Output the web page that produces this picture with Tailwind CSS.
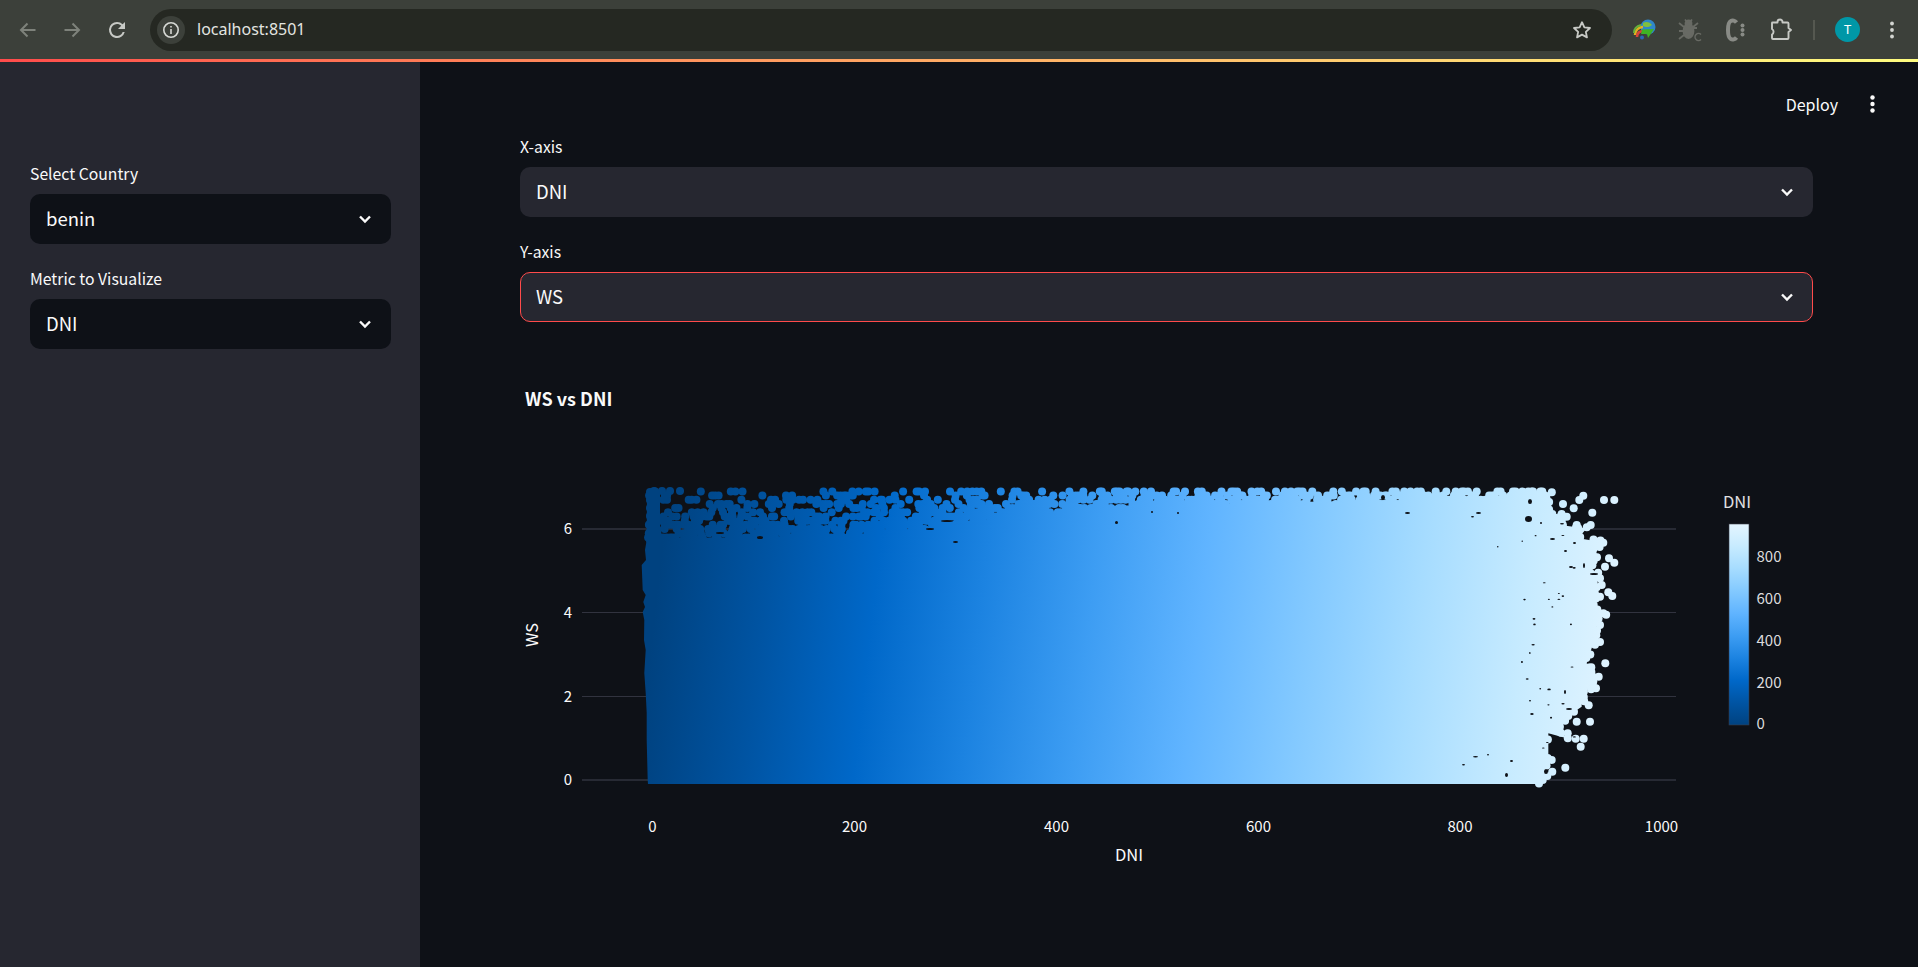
<!DOCTYPE html>
<html><head><script src="https://cdn.jsdelivr.net/npm/@tailwindcss/browser@4"></script></head>
<body class="m-0 h-[967px] w-[1918px] overflow-hidden bg-[#0e1117] text-[#fafafa] font-['Noto_Sans_CJK_JP',sans-serif]">

<header class="flex h-[59px] items-center bg-[#3c403a] pl-[14px] text-[#c7c9c5]">
  <svg class="h-[28px] w-[28px] text-[#7e827b]" viewBox="0 0 28 28" fill="none" stroke="currentColor" stroke-width="2"><path d="M21.5 14H7M13.5 7.5 7 14l6.500 6.500"/></svg>
  <svg class="ml-[16px] h-[28px] w-[28px] text-[#7e827b]" viewBox="0 0 28 28" fill="none" stroke="currentColor" stroke-width="2"><path d="M6.500 14H21M14.500 7.500 21 14l-6.500 6.500"/></svg>
  <svg class="ml-[19px] h-[24px] w-[24px]" viewBox="0 0 24 24" fill="currentColor"><path d="M17.650 6.350A7.950 7.950 0 0 0 12 4a8 8 0 1 0 7.730 10h-2.080A6 6 0 1 1 12 6c1.660 0 3.140.690 4.220 1.780L13 11h7V4l-2.350 2.350z"/></svg>
  <div class="ml-[21px] flex h-[42px] w-[1462px] shrink-0 items-center rounded-full bg-[#252822] pl-[7px]">
    <div class="flex h-[28px] w-[28px] items-center justify-center rounded-full bg-[#3c403a]">
      <svg class="h-[18px] w-[18px] text-[#d6d8d4]" viewBox="0 0 18 18" fill="none" stroke="currentColor" stroke-width="1.600"><circle cx="9" cy="9" r="7.200"/><path d="M9 8v5M9 5v1.600"/></svg>
    </div>
    <span class="ml-[12px] -translate-y-px font-['Noto_Sans',sans-serif] text-[16px] text-[#e3e5e1]">localhost:8501</span>
    <svg class="ml-auto mr-[19px] h-[22px] w-[22px] text-[#c7c9c5]" viewBox="0 0 24 24" fill="none" stroke="currentColor" stroke-width="2" stroke-linejoin="round"><path d="m12 3.500 2.600 5.600 6.100.700-4.500 4.200 1.200 6L12 17l-5.400 3 1.200-6-4.500-4.200 6.100-.700z"/></svg>
  </div>
  <svg class="ml-[19px] h-[28px] w-[28px]" viewBox="0 0 28 28">
    <circle cx="17" cy="11" r="7.500" fill="#2f86c9"/><path d="M12 7c3-2 7-1 9 2-2 2-6 3-9 1z" fill="#7fbf3f"/>
    <path d="M4 19c0-5 4-8 8-8" fill="none" stroke="#e2b021" stroke-width="2.500"/><path d="M6 21c0-4 3-6 7-6" fill="none" stroke="#d8423a" stroke-width="2.500"/><path d="M3 17c0-4 3-7 7-8" fill="none" stroke="#66b13a" stroke-width="2"/>
    <path d="M11 13.500 23 13l-6 9-1-4-6 0z" fill="#3fb324"/><circle cx="11" cy="21.500" r="2" fill="#2b66b8"/>
  </svg>
  <svg class="ml-[17px] h-[28px] w-[28px] text-[#686a64]" viewBox="0 0 28 28" fill="none" stroke="currentColor" stroke-width="1.800"><ellipse cx="12.500" cy="15" rx="5" ry="7" fill="currentColor"/><circle cx="12.500" cy="7.500" r="3" fill="currentColor"/><path d="M9 3.500 11 6M16 3.500 14 6M3 7l5 4M22 7l-5 4M3 23l5-4M17 12h4M3 15h5"/><path d="M25 18.500a3.500 3.500 0 1 0 0 5" stroke-width="1.500"/></svg>
  <svg class="ml-[17px] h-[28px] w-[28px] text-[#898b86]" viewBox="0 0 28 28" fill="currentColor"><path d="M15.500 6.500C14 4.500 11.500 4 9.800 5 7.500 6.200 7 9 7 14s.500 7.800 2.800 9c1.700 1 4.200.500 5.700-1.500" fill="none" stroke="currentColor" stroke-width="4"/><circle cx="21.500" cy="9.500" r="2"/><circle cx="21.500" cy="14" r="2"/><circle cx="21.500" cy="18.500" r="2"/></svg>
  <svg class="ml-[18px] h-[28px] w-[28px] text-[#c7c9c5]" viewBox="0 0 28 28" fill="none" stroke="currentColor" stroke-width="1.900" stroke-linejoin="round"><path d="M5.500 6.500h5V6a2.500 2.500 0 0 1 5 0v.500h5a1 1 0 0 1 1 1V12l2.500 2-2.500 2v6a1 1 0 0 1-1 1H6a1 1 0 0 1-1-1v-3.500a3 3 0 0 0 1.500-2.500A3 3 0 0 0 5 13V7a.5.5 0 0 1 .5-.500z"/></svg>
  <div class="ml-[18px] h-[20px] w-[2px] bg-[#555850]"></div>
  <div class="ml-[20px] flex h-[25px] w-[25px] items-center justify-center rounded-full bg-[#0097a7] font-['Noto_Sans',sans-serif] text-[13px] text-white">T</div>
  <svg class="ml-[30px] h-[20px] w-[4px] text-[#d3d5d1]" viewBox="0 0 4 20" fill="currentColor"><circle cx="2" cy="3.500" r="1.900"/><circle cx="2" cy="10" r="1.900"/><circle cx="2" cy="16.500" r="1.900"/></svg>
</header>
<div class="h-[3px] bg-gradient-to-r from-[#ff4b4b] to-[#fffd80]"></div>

<div class="flex h-[905px]">
  <aside class="w-[420px] shrink-0 bg-[#262730] pl-[30px] pr-[29px] pt-[101px]">
    <label class="block h-[22px] text-[15.750px] leading-[21px]">Select Country</label>
    <div class="mt-[9px] flex h-[50px] items-center justify-between rounded-[10px] bg-[#0e1117] pl-[16px] pr-[19px] text-[18.500px]">
      <span>benin</span>
      <svg class="h-[14px] w-[14px]" viewBox="0 0 14 14" fill="none" stroke="currentColor" stroke-width="2.400"><path d="m2 4.500 5 5 5-5"/></svg>
    </div>
    <label class="mt-[24px] block h-[22px] text-[15.750px] leading-[21px]">Metric to Visualize</label>
    <div class="mt-[9px] flex h-[50px] items-center justify-between rounded-[10px] bg-[#0e1117] pl-[16px] pr-[19px] text-[18.500px]">
      <span>DNI</span>
      <svg class="h-[14px] w-[14px]" viewBox="0 0 14 14" fill="none" stroke="currentColor" stroke-width="2.400"><path d="m2 4.500 5 5 5-5"/></svg>
    </div>
  </aside>

  <main class="relative flex-1 pl-[100px] pr-[105px] pt-[74px]">
    <div class="absolute right-[43px] top-[31px] flex items-center gap-[32px]">
      <span class="text-[16px] leading-[22px]">Deploy</span>
      <svg class="h-[18px] w-[5px]" viewBox="0 0 5 18" fill="currentColor"><circle cx="2.500" cy="2.500" r="2.200"/><circle cx="2.500" cy="9" r="2.200"/><circle cx="2.500" cy="15.500" r="2.200"/></svg>
    </div>

    <label class="block h-[22px] text-[15.750px] leading-[21px]">X-axis</label>
    <div class="mt-[9px] flex h-[50px] items-center justify-between rounded-[10px] bg-[#262730] pl-[16px] pr-[19px] text-[18.500px]">
      <span>DNI</span>
      <svg class="h-[14px] w-[14px]" viewBox="0 0 14 14" fill="none" stroke="currentColor" stroke-width="2.400"><path d="m2 4.500 5 5 5-5"/></svg>
    </div>
    <label class="mt-[24px] block h-[22px] text-[15.750px] leading-[21px]">Y-axis</label>
    <div class="mt-[9px] flex h-[50px] items-center justify-between rounded-[10px] border border-[#ff4b4b] bg-[#262730] pl-[15px] pr-[18px] text-[18.500px]">
      <span>WS</span>
      <svg class="h-[14px] w-[14px]" viewBox="0 0 14 14" fill="none" stroke="currentColor" stroke-width="2.400"><path d="m2 4.500 5 5 5-5"/></svg>
    </div>

    <svg class="mt-[23px] block h-[560px] w-[1293px] overflow-visible" viewBox="520 345 1293 560">
      <defs>
        <linearGradient id="g" gradientUnits="userSpaceOnUse" x1="652" y1="635" x2="1620" y2="745">
          <stop offset="0" stop-color="#004280"/><stop offset=".111" stop-color="#0054a3"/><stop offset=".222" stop-color="#0068c9"/><stop offset=".333" stop-color="#1c83e1"/><stop offset=".444" stop-color="#3d9df3"/><stop offset=".556" stop-color="#60b4ff"/><stop offset=".667" stop-color="#83c9ff"/><stop offset=".778" stop-color="#a6dcff"/><stop offset=".889" stop-color="#c7ebff"/><stop offset="1" stop-color="#e4f5ff"/>
        </linearGradient>
        <linearGradient id="c" x1="0" y1="1" x2="0" y2="0">
          <stop offset="0" stop-color="#004280"/><stop offset=".111" stop-color="#0054a3"/><stop offset=".222" stop-color="#0068c9"/><stop offset=".333" stop-color="#1c83e1"/><stop offset=".444" stop-color="#3d9df3"/><stop offset=".556" stop-color="#60b4ff"/><stop offset=".667" stop-color="#83c9ff"/><stop offset=".778" stop-color="#a6dcff"/><stop offset=".889" stop-color="#c7ebff"/><stop offset="1" stop-color="#e4f5ff"/>
        </linearGradient>
      </defs>

      <text x="525" y="397.500" dominant-baseline="central" fill="#fafafa" class="text-[18px] font-bold">WS vs DNI</text>

      <g stroke="#31333f">
        <path d="M582 529H1676M582 780H1676" stroke-width="1.600"/>
        <path d="M582 612.500H1676M582 696.500H1676" stroke-width="1"/>
      </g>

      <g id="scatter" fill="url(#g)"></g>
      <g id="specks" fill="#0e1117"></g>

      <g fill="#fafafa" class="text-[15px]" dominant-baseline="central">
        <g text-anchor="end">
          <text x="572" y="527.500">6</text><text x="572" y="611">4</text><text x="572" y="695">2</text><text x="572" y="778.500">0</text>
        </g>
        <g text-anchor="middle">
          <text x="652.500" y="825.500">0</text><text x="854.500" y="825.500">200</text><text x="1056.500" y="825.500">400</text><text x="1258.500" y="825.500">600</text><text x="1460" y="825.500">800</text><text x="1661.500" y="825.500">1000</text>
        </g>
      </g>
      <text x="1129" y="854" text-anchor="middle" dominant-baseline="central" fill="#fafafa" class="text-[16.500px]">DNI</text>
      <text transform="translate(531 635) rotate(-90)" text-anchor="middle" dominant-baseline="central" fill="#fafafa" class="text-[16.500px]">WS</text>

      <text x="1723" y="501" dominant-baseline="central" fill="#e0e0e2" class="text-[16.500px]">DNI</text>
      <rect x="1729" y="524" width="20" height="201" fill="url(#c)" stroke="#3b3c46" stroke-width=".6"/>
      <g fill="#dcdcde" class="text-[15px]" dominant-baseline="central">
        <text x="1756.500" y="555.500">800</text><text x="1756.500" y="597">600</text><text x="1756.500" y="639">400</text><text x="1756.500" y="681">200</text><text x="1756.500" y="722.500">0</text>
      </g>
    </svg>
  </main>
</div>

<script>
(function () {
  var s = 20240611;
  function rnd() { s |= 0; s = s + 0x6D2B79F5 | 0; var t = Math.imul(s ^ s >>> 15, 1 | s); t = t + Math.imul(t ^ t >>> 7, 61 | t) ^ t; return ((t ^ t >>> 14) >>> 0) / 4294967296; }
  var R = 4;
  var out = '';
  function dot(x, y) { out += '<circle cx="' + x.toFixed(1) + '" cy="' + y.toFixed(1) + '" r="' + R + '"/>'; }
  function z5(a) { return [1400 + a[0] / 3, 470 + a[1] / 3]; }
  function bodyTop(x) {
    if (x < 850) return 536;
    if (x < 1100) return 536 - (x - 850) / 250 * 30;
    if (x < 1400) return 506 - (x - 1100) / 300 * 6;
    return 500 - (x - 1400) / 150 * 4;
  }
  function pTop(x) {
    if (x < 1000) return 0.09 + (x - 647) / 353 * 0.08;
    if (x < 1150) return 0.17 + (x - 1000) / 150 * 0.21;
    return 0.38;
  }
  var left = [[647,490],[646.7,540],[645,550],[646,560],[641.7,565],[642.7,590],[645.7,595],[643.3,602],[645,607],[642.7,612],[644.3,620],[644,640],[645.7,650],[644.3,673],[645.7,693],[646.7,713],[646.7,740],[647.7,780],[648,784]];
  var right = [[450,70],[455,130],[490,135],[480,165],[520,170],[560,175],[535,205],[600,215],[585,260],[575,295],[600,320],[580,345],[590,375],[580,395],[610,430],[590,470],[580,520],[570,550],[560,580],[585,620],[565,655],[545,680],[545,710],[500,740],[480,780],[500,805],[445,790],[445,860],[450,870],[425,942]].map(z5);
  var pts = [[660,490],[660,538],[850,536],[1100,506],[1400,500]].concat(right).concat(left.slice().reverse());
  out += '<polygon points="' + pts.map(function (p) { return p.join(','); }).join(' ') + '"/>';
  // sparse rows above the solid body; wind speed is quantised in 0.1 steps
  for (var r = 0; r < 15; r++) {
    var y = 491.4 + 4.18 * r;
    for (var x = 648; x < 1548; x += 3) {
      var top = bodyTop(x);
      if (y > top + 6) continue;
      var t = Math.min(1, (y - 491) / (top - 491));
      var p = pTop(x) + (0.62 - pTop(x)) * Math.pow(t, 1.2);
      if (rnd() < p) dot(x + rnd() * 2, y);
    }
  }
  // left column of the top rows
  for (var i = 0; i < 7; i++) dot(650, 492 + i * 8);
  [[654,491],[662,491],[670,491],[680,491]].forEach(function (a) { dot(a[0], a[1]); });
  // lumpy right side: irregular dots along the outline
  for (var k = 0; k < right.length - 1; k++) {
    var a = right[k], b = right[k + 1];
    var len = Math.hypot(b[0] - a[0], b[1] - a[1]);
    for (var d = 0; d < len; d += 5) {
      if (rnd() < 0.4) continue;
      dot(a[0] + (b[0] - a[0]) * d / len + rnd() * 6 - 3, a[1] + (b[1] - a[1]) * d / len + rnd() * 3 - 1.5);
    }
  }
  // stray outliers on the right
  [[612,90],[643,90],[550,77],[538,90],[489,102],[521,115],[577,128],[572,165],[530,165],[500,140],[627,265],[643,278],[625,367],[637,378],[616,580],[570,755],[496,893],[542,830],[551,806],[527,806],[457,905],[442,918],[455,870],[600,516],[588,655],[596,620],[574,592],[566,706],[530,755],[503,790],[610,218],[590,218],[600,325],[605,345],[615,290],[590,352],[600,380],[610,430],[600,465],[455,768]].forEach(function (a) { var q = z5(a); dot(q[0], q[1]); });
  document.getElementById('scatter').innerHTML = out;

  var sp = '';
  function speck(x, y, w, h) { sp += '<ellipse cx="' + (x + w / 2) + '" cy="' + (y + h / 2) + '" rx="' + w / 2 + '" ry="' + h / 2 + '"/>'; }
  [[757,536,6,3],[953,541,5,2],[941,520,12,2],[926,528,8,2],[716,532,8,2],[1115,521,3,3],[1151,511,2,2],[1177,512,2,2],[1405,512,5,2],[1476,512,5,2],[1525,516,7,6],[1528,499,4,5],[1381,495,4,5],[1540,522,2,2],[1550,538,5,2],[1497,546,1.500,1.500],[1471,516,3,1.500],[1564,550,3,2],[1573,542,3,2],[1560,523,4,1.500],[1590,573,8,2],[1569,566,4,2],[1583,563,2,5],[1529,700,2,1.500],[1473,756,5,1.500],[1510,760,3,2],[1505,773,3,4],[1462,764,3,1.500],[1487,754,2,1.500],[1564,690,2,4],[1566,708,6,2],[1544,769,4,5]].forEach(function (a) { speck(a[0], a[1], a[2], a[3]); });
  // pinholes in the right edge of the cloud
  for (var n = 0; n < 30; n++) speck(1520 + rnd() * 55, 530 + rnd() * 230, 1.5 + rnd() * 2, 1 + rnd());
  document.getElementById('specks').innerHTML = sp;
})();
</script>
</body></html>
